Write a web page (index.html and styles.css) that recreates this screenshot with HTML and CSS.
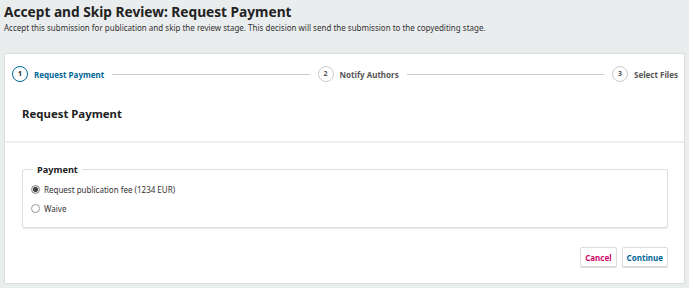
FILE: index.html
```html
<!DOCTYPE html>
<html lang="en">
<head>
    <meta charset="UTF-8">
    <title>Accept and Skip Review</title>
    <link rel="stylesheet" href="styles.css">
</head>
<body>
    <div class="page">
        <h1 class="title">Accept and Skip Review: Request Payment</h1>
        <p class="desc">Accept this submission for publication and skip the review stage. This decision will send the submission to the copyediting stage.</p>

        <div class="panel">
            <ol class="steps">
                <li class="step current"><span class="num">1</span><span class="label">Request Payment</span></li>
                <li class="sep"></li>
                <li class="step"><span class="num">2</span><span class="label">Notify Authors</span></li>
                <li class="sep"></li>
                <li class="step"><span class="num">3</span><span class="label">Select Files</span></li>
            </ol>

            <div class="head">
                <h2>Request Payment</h2>
            </div>

            <form class="form">
                <fieldset class="group">
                    <legend>Payment</legend>
                    <label class="opt"><input type="radio" name="payment" checked> Request publication fee (1234 EUR)</label>
                    <label class="opt"><input type="radio" name="payment"> Waive</label>
                </fieldset>
                <div class="actions">
                    <button type="button" class="btn cancel">Cancel</button>
                    <button type="button" class="btn primary">Continue</button>
                </div>
            </form>
        </div>
    </div>
</body>
</html>
```

FILE: styles.css
```css
body{
    margin: 0;
    background-color: #eaedee;
    font-family: "Noto Sans", "Liberation Sans", sans-serif;
    color: #222;
}
.page{
    padding: 3px 4px 5px;
}
.title{
    margin: 0;
    font-size: 13.7px;
    line-height: 18px;
    font-weight: bold;
}
.desc{
    margin: 0;
    font-size: 8px;
    line-height: 13px;
    color: #333;
}
.panel{
    margin-top: 19px;
    background-color: white;
    border: 1px solid #dcdcdc;
    border-radius: 2px;
}
.steps{
    display: flex;
    align-items: center;
    list-style: none;
    margin: 0;
    padding: 7px 6px 0 7px;
    height: 26px;
}
.step{
    display: flex;
    align-items: center;
    gap: 6px;
    font-size: 8px;
    font-weight: bold;
    color: #555;
}
.step .num{
    width: 14px;
    height: 14px;
    line-height: 14px;
    border: 1px solid #ccc;
    border-radius: 50%;
    text-align: center;
    font-size: 7px;
}
.step.current{
    color: #006798;
}
.step.current .num{
    border-color: #006798;
    color: #222;
}
.sep{
    flex: 1;
    height: 1px;
    background-color: #ccc;
    margin: 0 8px;
}
.head{
    padding: 16px 17px 16px;
    border-bottom: 2px solid #eee;
}
.head h2{
    margin: 0;
    font-size: 11.4px;
    line-height: 22px;
    font-weight: bold;
}
.form{
    padding: 20px 16px 16px 17px;
}
.group{
    margin: 0;
    padding: 4px 14px 9px 8px;
    border: 1px solid #ddd;
    border-radius: 2px;
    box-shadow: 0 1px 0 #eee;
}
.group legend{
    padding: 0 4px;
    margin-left: 2px;
    font-size: 9.2px;
    font-weight: bold;
}
.opt{
    display: flex;
    align-items: center;
    font-size: 8px;
    line-height: 19px;
    color: #333;
}
.opt input{
    appearance: none;
    margin: 0 4px 0 0;
    width: 9px;
    height: 9px;
    border: 1px solid #999;
    border-radius: 50%;
    background-color: white;
}
.opt input:checked{
    background: radial-gradient(circle, #444 0 2.2px, #ddd 2.6px);
    border-color: #888;
}
.actions{
    display: flex;
    justify-content: flex-end;
    gap: 5px;
    margin-top: 19px;
}
.btn{
    font-family: inherit;
    font-size: 8px;
    font-weight: bold;
    height: 20px;
    padding: 0 4px;
    background-color: white;
    border: 1px solid #ddd;
    border-radius: 2px;
    box-shadow: 0 1px 0 #ddd;
}
.btn.cancel{
    color: #d00a6c;
}
.btn.primary{
    color: #006798;
}
```
